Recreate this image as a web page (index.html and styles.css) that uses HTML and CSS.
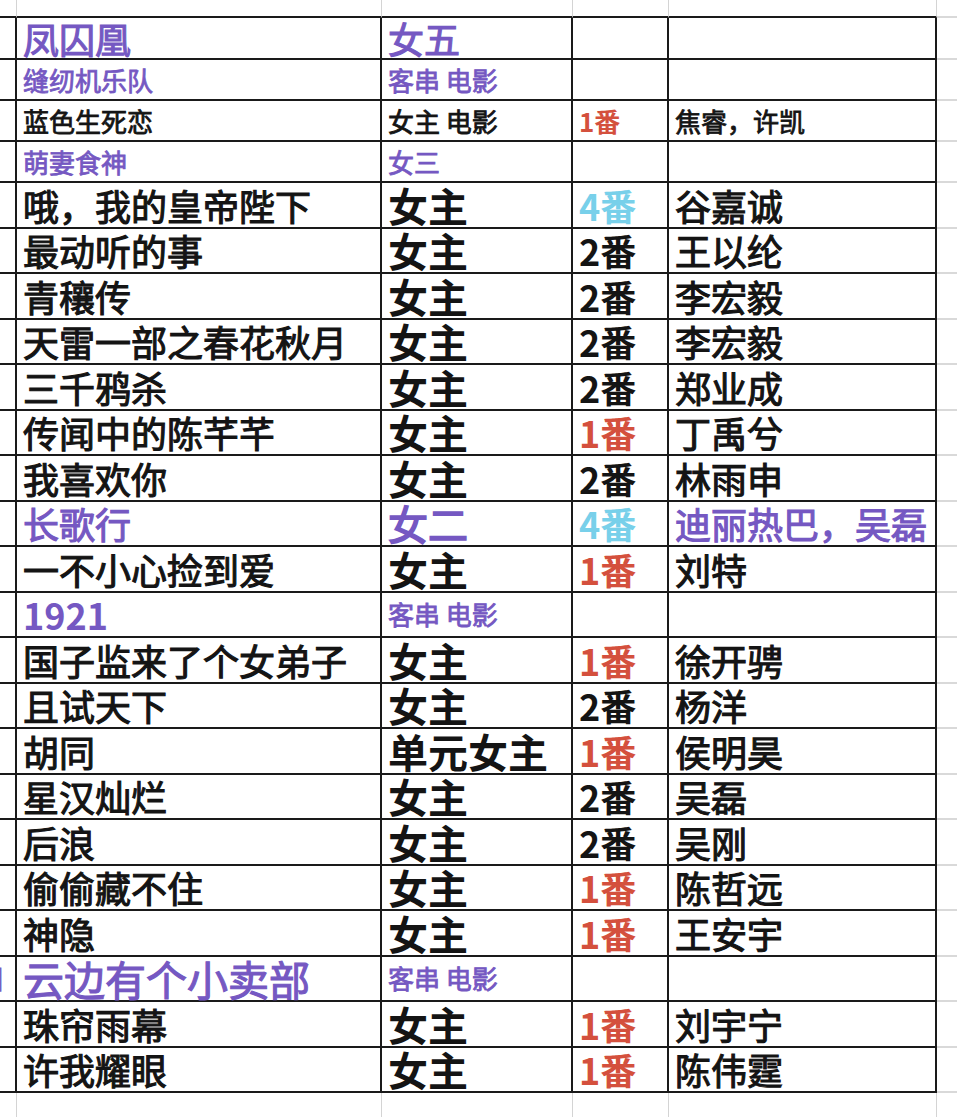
FILE: index.html
```html
<!DOCTYPE html>
<html lang="zh-CN">
<head>
<meta charset="utf-8">
<title>表格</title>
<link rel="stylesheet" href="styles.css">
</head>
<body>
<div class="sheet">
  <div class="c top stub-top"></div>
  <div class="c top"></div>
  <div class="c top"></div>
  <div class="c top"></div>
  <div class="c top"></div>
  <div class="c rest"></div>

  <div class="c stub"></div>
  <div class="c d t36 m purple">凤囚凰</div>
  <div class="c d t36 m purple">女五</div>
  <div class="c d"></div>
  <div class="c d"></div>
  <div class="c rest"></div>

  <div class="c stub"></div>
  <div class="c d t26 m purple">缝纫机乐队</div>
  <div class="c d t26 m purple">客串 电影</div>
  <div class="c d"></div>
  <div class="c d"></div>
  <div class="c rest"></div>

  <div class="c stub"></div>
  <div class="c d t26 m">蓝色生死恋</div>
  <div class="c d t26 m">女主 电影</div>
  <div class="c d t26 b red">1番</div>
  <div class="c d t26 m">焦睿，许凯</div>
  <div class="c rest"></div>

  <div class="c stub"></div>
  <div class="c d t26 m purple">萌妻食神</div>
  <div class="c d t26 m purple">女三</div>
  <div class="c d"></div>
  <div class="c d"></div>
  <div class="c rest"></div>

  <div class="c stub"></div>
  <div class="c d t36 m">哦，我的皇帝陛下</div>
  <div class="c d t40 b">女主</div>
  <div class="c d t36 b blue">4番</div>
  <div class="c d t36 m">谷嘉诚</div>
  <div class="c rest"></div>

  <div class="c stub"></div>
  <div class="c d t36 m">最动听的事</div>
  <div class="c d t40 b">女主</div>
  <div class="c d t36 b">2番</div>
  <div class="c d t36 m">王以纶</div>
  <div class="c rest"></div>

  <div class="c stub"></div>
  <div class="c d t36 m">青穰传</div>
  <div class="c d t40 b">女主</div>
  <div class="c d t36 b">2番</div>
  <div class="c d t36 m">李宏毅</div>
  <div class="c rest"></div>

  <div class="c stub"></div>
  <div class="c d t36 m">天雷一部之春花秋月</div>
  <div class="c d t40 b">女主</div>
  <div class="c d t36 b">2番</div>
  <div class="c d t36 m">李宏毅</div>
  <div class="c rest"></div>

  <div class="c stub"></div>
  <div class="c d t36 m">三千鸦杀</div>
  <div class="c d t40 b">女主</div>
  <div class="c d t36 b">2番</div>
  <div class="c d t36 m">郑业成</div>
  <div class="c rest"></div>

  <div class="c stub"></div>
  <div class="c d t36 m">传闻中的陈芊芊</div>
  <div class="c d t40 b">女主</div>
  <div class="c d t36 b red">1番</div>
  <div class="c d t36 m">丁禹兮</div>
  <div class="c rest"></div>

  <div class="c stub"></div>
  <div class="c d t36 m">我喜欢你</div>
  <div class="c d t40 b">女主</div>
  <div class="c d t36 b">2番</div>
  <div class="c d t36 m">林雨申</div>
  <div class="c rest"></div>

  <div class="c stub"></div>
  <div class="c d t36 m purple">长歌行</div>
  <div class="c d t40 m2 purple">女二</div>
  <div class="c d t36 b blue">4番</div>
  <div class="c d t36 m purple">迪丽热巴，吴磊</div>
  <div class="c rest"></div>

  <div class="c stub"></div>
  <div class="c d t36 m">一不小心捡到爱</div>
  <div class="c d t40 b">女主</div>
  <div class="c d t36 b red">1番</div>
  <div class="c d t36 m">刘特</div>
  <div class="c rest"></div>

  <div class="c stub"></div>
  <div class="c d t36 b purple">1921</div>
  <div class="c d t26 m purple">客串 电影</div>
  <div class="c d"></div>
  <div class="c d"></div>
  <div class="c rest"></div>

  <div class="c stub"></div>
  <div class="c d t36 m">国子监来了个女弟子</div>
  <div class="c d t40 b">女主</div>
  <div class="c d t36 b red">1番</div>
  <div class="c d t36 m">徐开骋</div>
  <div class="c rest"></div>

  <div class="c stub"></div>
  <div class="c d t36 m">且试天下</div>
  <div class="c d t40 b">女主</div>
  <div class="c d t36 b">2番</div>
  <div class="c d t36 m">杨洋</div>
  <div class="c rest"></div>

  <div class="c stub"></div>
  <div class="c d t36 m">胡同</div>
  <div class="c d t40 b">单元女主</div>
  <div class="c d t36 b red">1番</div>
  <div class="c d t36 m">侯明昊</div>
  <div class="c rest"></div>

  <div class="c stub"></div>
  <div class="c d t36 m">星汉灿烂</div>
  <div class="c d t40 b">女主</div>
  <div class="c d t36 b">2番</div>
  <div class="c d t36 m">吴磊</div>
  <div class="c rest"></div>

  <div class="c stub"></div>
  <div class="c d t36 m">后浪</div>
  <div class="c d t40 b">女主</div>
  <div class="c d t36 b">2番</div>
  <div class="c d t36 m">吴刚</div>
  <div class="c rest"></div>

  <div class="c stub"></div>
  <div class="c d t36 m">偷偷藏不住</div>
  <div class="c d t40 b">女主</div>
  <div class="c d t36 b red">1番</div>
  <div class="c d t36 m">陈哲远</div>
  <div class="c rest"></div>

  <div class="c stub"></div>
  <div class="c d t36 m">神隐</div>
  <div class="c d t40 b">女主</div>
  <div class="c d t36 b red">1番</div>
  <div class="c d t36 m">王安宇</div>
  <div class="c rest"></div>

  <div class="c stub"><span class="spill m purple">目</span></div>
  <div class="c d t41 m purple">云边有个小卖部</div>
  <div class="c d t26 m purple">客串 电影</div>
  <div class="c d"></div>
  <div class="c d"></div>
  <div class="c rest"></div>

  <div class="c stub"></div>
  <div class="c d t36 m">珠帘雨幕</div>
  <div class="c d t40 b">女主</div>
  <div class="c d t36 b red">1番</div>
  <div class="c d t36 m">刘宇宁</div>
  <div class="c rest"></div>

  <div class="c stub"></div>
  <div class="c d t36 m">许我耀眼</div>
  <div class="c d t40 b">女主</div>
  <div class="c d t36 b red">1番</div>
  <div class="c d t36 m">陈伟霆</div>
  <div class="c rest"></div>

  <div class="c foot"></div>
  <div class="c foot"></div>
  <div class="c foot"></div>
  <div class="c foot"></div>
  <div class="c foot"></div>
  <div class="c foot-rest"></div>
</div>
</body>
</html>
```

FILE: styles.css
```css
* { box-sizing: border-box; }

html, body {
  margin: 0;
  padding: 0;
  background: #ffffff;
}

body {
  font-family: "Noto Sans CJK SC", "Noto Sans", sans-serif;
  color: #141414;
}

.sheet {
  display: grid;
  width: 957px;
  height: 1117px;
  grid-template-columns: 17px 365px 191px 96px 268px 1fr;
  grid-template-rows: 18px 42px 41px 41px 41px repeat(20, 45.5px) 1fr;
}

.c {
  display: flex;
  align-items: center;
  white-space: nowrap;
  line-height: 1;
  min-width: 0;
}

.top {
  border-right: 1px solid #d4d4d4;
  border-bottom: 2px solid #1a1a1a;
}

.stub {
  border-right: 2px solid #1a1a1a;
  border-bottom: 2px solid #1a1a1a;
  justify-content: flex-end;
  overflow: hidden;
}

.d {
  border-right: 2px solid #1a1a1a;
  border-bottom: 2px solid #1a1a1a;
  padding-left: 6px;
  font-weight: 400;
}

/* medium weight emulation */
.m {
  font-weight: 400;
  -webkit-text-stroke: 1.1px currentColor;
}

.m2 {
  font-weight: 400;
  -webkit-text-stroke: 1.6px currentColor;
}

.b { font-weight: 700; }

.rest {
  border-bottom: 2px solid #d9d9d9;
}

.foot {
  border-right: 1px solid #d4d4d4;
}

.foot-rest {
  background: #ffffff;
}

.t26 { font-size: 26px; }
.t36 { font-size: 36px; }
.t40 { font-size: 40px; }
.t41 { font-size: 41px; }

.t26.m { -webkit-text-stroke-width: 0.8px; }

.purple { color: #7558c2; }
.red { color: #d4503d; }
.blue { color: #78d0ea; }

.spill {
  font-size: 26px;
  margin-right: 10px;
  line-height: 1;
}
```
